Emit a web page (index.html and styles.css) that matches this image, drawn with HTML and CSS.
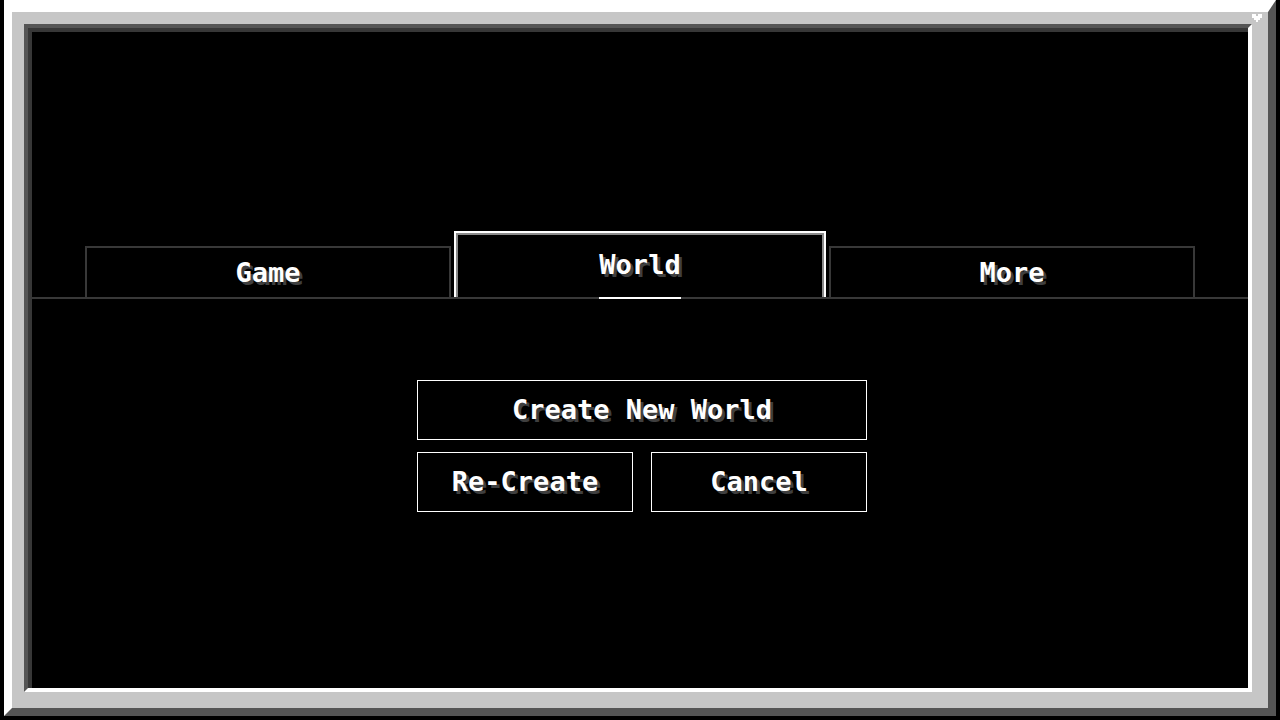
FILE: index.html
```html
<!DOCTYPE html>
<html lang="en">
<head>
  <meta charset="UTF-8">
  <meta name="viewport" content="width=device-width, initial-scale=1.0">
  <title>Create New World</title>
  <link rel="stylesheet" href="styles.css">
</head>
<body>
  <div class="window">
    <!-- Corner badge -->
    <svg class="heart" viewBox="0 0 5 4" shape-rendering="crispEdges">
      <rect x="0" y="0" width="2" height="1" fill="#fff"/>
      <rect x="3" y="0" width="2" height="1" fill="#fff"/>
      <rect x="0" y="1" width="5" height="1" fill="#fff"/>
      <rect x="1" y="2" width="3" height="1" fill="#fff"/>
      <rect x="2" y="3" width="1" height="1" fill="#fff"/>
    </svg>

    <div class="panel">
      <!-- Tabs -->
      <nav class="tabs">
        <div class="tab"><span class="label">Game</span></div>
        <div class="tab active"><span class="label">World</span></div>
        <div class="tab"><span class="label">More</span></div>
      </nav>

      <!-- Actions -->
      <div class="actions">
        <button class="btn">Create New World</button>
        <div class="btn-row">
          <button class="btn">Re-Create</button>
          <button class="btn">Cancel</button>
        </div>
      </div>
    </div>
  </div>
</body>
</html>
```

FILE: styles.css
```css
/* General Styles */
html, body {
  margin: 0;
  padding: 0;
  background: #000;
}

body {
  font-family: "DejaVu Sans Mono", "Liberation Mono", monospace;
  font-weight: bold;
  font-size: 27px;
  color: #fff;
}

/* Window frame */
.window {
  position: relative;
  box-sizing: border-box;
  width: 1272px;
  height: 716px;
  margin: 0 4px;
  padding: 12px 16px 16px 12px;
  border-style: solid;
  border-width: 12px 8px 8px 8px;
  border-color: #fff #555 #555 #fff;
  background: #c6c6c6;
}

.heart {
  position: absolute;
  top: 2px;
  right: 6px;
  width: 10px;
  height: 8px;
}

.panel {
  box-sizing: border-box;
  height: 100%;
  padding: 4px 0 0 4px;
  border-style: solid;
  border-width: 4px;
  border-color: #555 #fff #fff #555;
  background: #000;
  box-shadow: inset 4px 4px 0 #373737;
}

/* Tabs */
.tabs {
  display: flex;
  justify-content: center;
  align-items: flex-end;
  gap: 3px;
  padding-top: 199px;
  border-bottom: 2px solid #383838;
}

.tab {
  box-sizing: border-box;
  width: 366px;
  height: 51px;
  display: flex;
  align-items: center;
  justify-content: center;
  border: 2px solid #383838;
  border-bottom: 0;
}

.tab.active {
  width: 372px;
  height: 66px;
  border-color: #fff;
  box-shadow: inset 2px 2px 0 #8b8b8b, inset -2px 0 0 #8b8b8b;
}

.label {
  position: relative;
  line-height: 24px;
  text-shadow: 3px 3px 0 #3f3f3f;
}

.tab.active .label::after {
  content: "";
  position: absolute;
  left: 0;
  right: 0;
  top: calc(100% + 20px);
  height: 2px;
  background: #fff;
}

/* Buttons */
.actions {
  width: 450px;
  margin: 81px 0 0 385px;
  display: flex;
  flex-direction: column;
  gap: 12px;
}

.btn-row {
  display: flex;
  gap: 18px;
}

.btn-row .btn {
  flex: 1;
}

.btn {
  box-sizing: border-box;
  height: 60px;
  padding: 0;
  border: 1px solid #fff;
  background: #000;
  color: #fff;
  font: inherit;
  line-height: 24px;
  text-shadow: 3px 3px 0 #3f3f3f;
  cursor: pointer;
}
```
